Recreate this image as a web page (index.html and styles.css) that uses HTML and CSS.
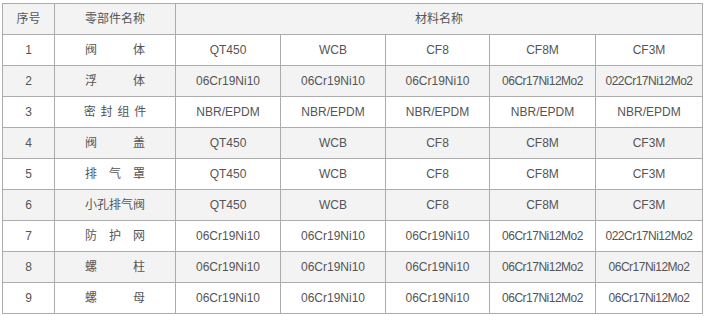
FILE: index.html
```html
<!DOCTYPE html>
<html lang="zh">
<head>
<meta charset="utf-8">
<title>材料表</title>
<link rel="stylesheet" href="styles.css">
</head>
<body>
<table class="spec">
  <colgroup>
    <col class="c-no"><col class="c-name"><col class="c-m1"><col class="c-m2"><col class="c-m3"><col class="c-m4"><col class="c-m5">
  </colgroup>
  <thead>
    <tr class="alt"><th>序号</th><th>零部件名称</th><th colspan="5">材料名称</th></tr>
  </thead>
  <tbody>
    <tr><td>1</td><td>阀　　　体</td><td>QT450</td><td>WCB</td><td>CF8</td><td>CF8M</td><td>CF3M</td></tr>
    <tr class="alt"><td>2</td><td>浮　　　体</td><td>06Cr19Ni10</td><td>06Cr19Ni10</td><td>06Cr19Ni10</td><td class="sm">06Cr17Ni12Mo2</td><td class="sm">022Cr17Ni12Mo2</td></tr>
    <tr><td>3</td><td class="spaced">密 封 组 件</td><td>NBR/EPDM</td><td>NBR/EPDM</td><td>NBR/EPDM</td><td>NBR/EPDM</td><td>NBR/EPDM</td></tr>
    <tr class="alt"><td>4</td><td>阀　　　盖</td><td>QT450</td><td>WCB</td><td>CF8</td><td>CF8M</td><td>CF3M</td></tr>
    <tr><td>5</td><td>排　气　罩</td><td>QT450</td><td>WCB</td><td>CF8</td><td>CF8M</td><td>CF3M</td></tr>
    <tr class="alt"><td>6</td><td>小孔排气阀</td><td>QT450</td><td>WCB</td><td>CF8</td><td>CF8M</td><td>CF3M</td></tr>
    <tr><td>7</td><td>防　护　网</td><td>06Cr19Ni10</td><td>06Cr19Ni10</td><td>06Cr19Ni10</td><td class="sm">06Cr17Ni12Mo2</td><td class="sm">022Cr17Ni12Mo2</td></tr>
    <tr class="alt"><td>8</td><td>螺　　　柱</td><td>06Cr19Ni10</td><td>06Cr19Ni10</td><td>06Cr19Ni10</td><td class="sm">06Cr17Ni12Mo2</td><td class="sm">06Cr17Ni12Mo2</td></tr>
    <tr><td>9</td><td>螺　　　母</td><td>06Cr19Ni10</td><td>06Cr19Ni10</td><td>06Cr19Ni10</td><td class="sm">06Cr17Ni12Mo2</td><td class="sm">06Cr17Ni12Mo2</td></tr>
  </tbody>
</table>
</body>
</html>
```

FILE: styles.css
```css
html, body {
  margin: 0;
  background: #ffffff;
}
body {
  padding: 3px 0 0 2px;
  font-family: "Liberation Sans", Arial, "Noto Sans CJK SC", sans-serif;
  font-size: 12px;
  color: #555555;
}
.spec {
  border-collapse: collapse;
  table-layout: fixed;
  width: 701px;
}
.c-no { width: 52px; }
.c-name { width: 121px; }
.c-m1 { width: 105px; }
.c-m2 { width: 105px; }
.c-m3 { width: 104px; }
.c-m4 { width: 106px; }
.c-m5 { width: 107px; }
.spec th,
.spec td {
  border: 1px solid #acacac;
  height: 30px;
  padding: 0;
  text-align: center;
  vertical-align: middle;
  font-weight: normal;
  white-space: nowrap;
  line-height: 14px;
}
.spec tr.alt th,
.spec tr.alt td {
  background: #f3f3f3;
}
.spec td.sm {
  letter-spacing: -0.5px;
}
.spec td.spaced {
  word-spacing: 1.5px;
}
```
